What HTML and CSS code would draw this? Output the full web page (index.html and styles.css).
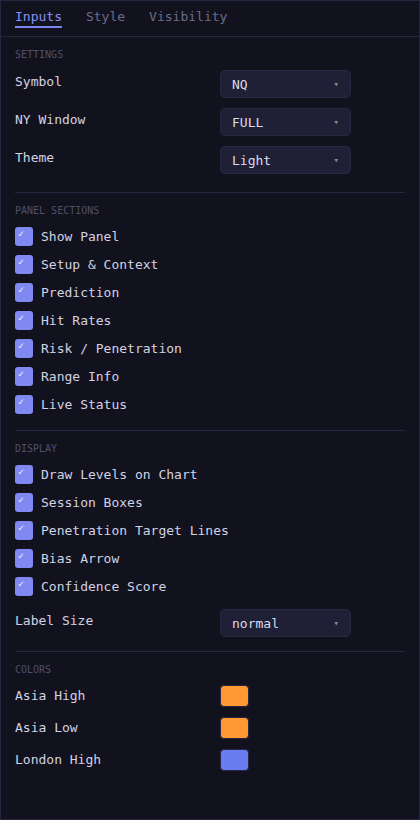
FILE: index.html
```html
<!DOCTYPE html>
<html>
<head>
<meta charset="utf-8">
<link rel="stylesheet" href="styles.css">
</head>
<body>
<div class="panel">
  <div class="tabs">
    <span class="tab active">Inputs</span>
    <span class="tab">Style</span>
    <span class="tab">Visibility</span>
  </div>
  <div class="content">
    <section class="section s-settings">
      <div class="sec-label">SETTINGS</div>
      <div class="rows">
        <div class="row"><span class="lbl">Symbol</span><div class="select"><span>NQ</span><span class="arrow">▾</span></div></div>
        <div class="row"><span class="lbl">NY Window</span><div class="select"><span>FULL</span><span class="arrow">▾</span></div></div>
        <div class="row"><span class="lbl">Theme</span><div class="select"><span>Light</span><span class="arrow">▾</span></div></div>
      </div>
    </section>
    <section class="section s-panel">
      <div class="sec-label">PANEL SECTIONS</div>
      <div class="checks">
        <div class="check"><span class="box">✓</span><span>Show Panel</span></div>
        <div class="check"><span class="box">✓</span><span>Setup &amp; Context</span></div>
        <div class="check"><span class="box">✓</span><span>Prediction</span></div>
        <div class="check"><span class="box">✓</span><span>Hit Rates</span></div>
        <div class="check"><span class="box">✓</span><span>Risk / Penetration</span></div>
        <div class="check"><span class="box">✓</span><span>Range Info</span></div>
        <div class="check"><span class="box">✓</span><span>Live Status</span></div>
      </div>
    </section>
    <section class="section s-display">
      <div class="sec-label">DISPLAY</div>
      <div class="checks">
        <div class="check"><span class="box">✓</span><span>Draw Levels on Chart</span></div>
        <div class="check"><span class="box">✓</span><span>Session Boxes</span></div>
        <div class="check"><span class="box">✓</span><span>Penetration Target Lines</span></div>
        <div class="check"><span class="box">✓</span><span>Bias Arrow</span></div>
        <div class="check"><span class="box">✓</span><span>Confidence Score</span></div>
      </div>
      <div class="rows after-checks">
        <div class="row"><span class="lbl">Label Size</span><div class="select"><span>normal</span><span class="arrow">▾</span></div></div>
      </div>
    </section>
    <section class="section s-colors">
      <div class="sec-label">COLORS</div>
      <div class="colors">
        <div class="crow"><span class="lbl">Asia High</span><span class="swatch orange"></span></div>
        <div class="crow"><span class="lbl">Asia Low</span><span class="swatch orange"></span></div>
        <div class="crow"><span class="lbl">London High</span><span class="swatch blue"></span></div>
      </div>
    </section>
  </div>
</div>
</body>
</html>
```
FILE: styles.css
```css
* { box-sizing: border-box; }
html, body { margin: 0; padding: 0; background: #12121f; }
body {
  font-family: "DejaVu Sans Mono", "Liberation Mono", monospace;
  font-size: 13px;
  color: #d2d2e2;
}
.panel {
  width: 420px;
  height: 820px;
  border: 1px solid #262640;
  background: #12121f;
  overflow: hidden;
}
.tabs {
  display: flex;
  gap: 24px;
  padding: 7px 14px 0;
  height: 36px;
  border-bottom: 1px solid #262640;
}
.tab {
  line-height: 18px;
  height: 20px;
  color: #6c6c86;
  border-bottom: 2px solid transparent;
}
.tab.active {
  color: #8a91f6;
  border-bottom-color: #7c84f0;
}
.content {
  padding: 0 14px;
}
.section {
  padding-top: 11px;
  border-top: 1px solid #262640;
}
.section:first-child { border-top: none; }
.s-settings { padding-bottom: 18px; }
.s-panel { padding-bottom: 16px; }
.s-display { padding-bottom: 14px; }
.sec-label {
  font-size: 10px;
  line-height: 14px;
  color: #4f4f6a;
  margin-bottom: 8px;
}
.rows {
  display: flex;
  flex-direction: column;
  gap: 10px;
}
.row {
  display: grid;
  grid-template-columns: 205px 131px;
  align-items: start;
  height: 28px;
}
.row .lbl { padding-top: 4px; }
.after-checks { margin-top: 13px; }
.lbl { line-height: 16px; }
.select {
  height: 28px;
  background: #1f1f35;
  border: 1px solid #282842;
  border-radius: 5px;
  display: flex;
  align-items: center;
  justify-content: space-between;
  padding: 0 11px 0 11px;
  color: #dcdcec;
}
.arrow {
  font-size: 9px;
  color: #8a8aa0;
}
.checks {
  display: flex;
  flex-direction: column;
  gap: 8px;
}
.check {
  display: flex;
  align-items: center;
  gap: 8px;
  height: 20px;
}
.box {
  width: 18px;
  height: 19px;
  border-radius: 3px;
  background: #8088f2;
  color: #f0f0ff;
  font-size: 10px;
  font-weight: bold;
  line-height: 1;
  padding: 2px 0 0 3px;
  flex: none;
}
.colors {
  display: flex;
  flex-direction: column;
  gap: 10px;
}
.crow {
  display: grid;
  grid-template-columns: 205px 29px;
  align-items: center;
  height: 22px;
}
.crow .lbl { margin-top: -1px; }
.swatch {
  width: 29px;
  height: 22px;
  border: 1px solid #262640;
  border-radius: 4px;
}
.orange { background: #ff9a33; }
.blue { background: #6a7cf2; }
```
